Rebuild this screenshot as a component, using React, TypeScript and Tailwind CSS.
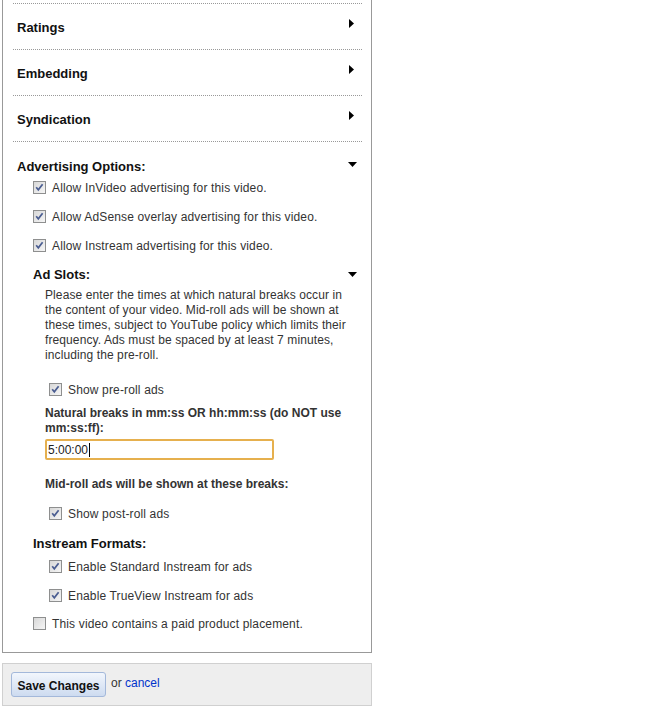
import React from 'react'

const font = "font-['Liberation_Sans',Arial,sans-serif]"

function Box({ checked }: { checked: boolean }) {
  return (
    <svg width="13" height="13" viewBox="0 0 13 13" className="shrink-0">
      <defs>
        <linearGradient id={checked ? 'cbOn' : 'cbOff'} x1="0" y1="0" x2="1" y2="1">
          <stop offset="0" stopColor="#d6d6d6" />
          <stop offset="1" stopColor="#f7f7f7" />
        </linearGradient>
      </defs>
      <rect x="0.5" y="0.5" width="12" height="12" fill={`url(#${checked ? 'cbOn' : 'cbOff'})`} stroke="#8e8f8f" />
      {checked && <path d="M3.2 6.2 L5.3 8.8 L9.6 3.2" stroke="#4a5d91" strokeWidth="1.7" fill="none" />}
    </svg>
  )
}

function CheckRow({ label, checked = true, className = '' }: { label: string; checked?: boolean; className?: string }) {
  return (
    <div className={`flex h-5 items-center gap-[6px] ${className}`}>
      <Box checked={checked} />
      <span className="pt-[2px] text-[12px] leading-[15px] tracking-[0.15px] text-[#333]">{label}</span>
    </div>
  )
}

function TriRight() {
  return (
    <svg width="5" height="9" viewBox="0 0 5 9" className="mb-[7px] mr-[8px] shrink-0">
      <polygon points="0,0 5,4.5 0,9" fill="#000" />
    </svg>
  )
}

function TriDown({ className = '' }: { className?: string }) {
  return (
    <svg width="9" height="5" viewBox="0 0 9 5" className={`mr-[5px] shrink-0 ${className}`}>
      <polygon points="0,0 9,0 4.5,5" fill="#000" />
    </svg>
  )
}

export default function App() {
  const closed = ['Ratings', 'Embedding', 'Syndication']

  return (
    <div className={`min-h-screen bg-white ${font}`}>
      <div className="ml-[2px] w-[370px] border-x border-b border-[#999] pt-[3px] pl-[10px] pr-[9px] pb-[19px]">
        {closed.map((title) => (
          <div key={title} className="flex h-[46px] items-center justify-between border-t border-dotted border-[#999] pl-[4px]">
            <span className="pt-[2px] text-[13px] font-bold leading-4 text-[#111]">{title}</span>
            <TriRight />
          </div>
        ))}

        <div className="border-t border-dotted border-[#999] pt-[15px]">
          <div className="flex items-center justify-between pl-[4px]">
            <span className="pt-[2px] text-[13px] font-bold leading-4 text-[#111]">Advertising Options:</span>
            <TriDown className="mb-[4px]" />
          </div>

          <div className="pl-[20px]">
            <div className="mt-[2px] flex flex-col gap-[9px]">
              <CheckRow label="Allow InVideo advertising for this video." />
              <CheckRow label="Allow AdSense overlay advertising for this video." />
              <CheckRow label="Allow Instream advertising for this video." />
            </div>

            <div className="mt-[10px] flex items-center justify-between">
              <span className="pt-[2px] text-[13px] font-bold leading-4 text-[#111]">Ad Slots:</span>
              <TriDown />
            </div>

            <p className="ml-[12px] mt-[5px] w-[306px] text-[12px] leading-[15px] tracking-[0.1px] text-[#333]">
              Please enter the times at which natural breaks occur in the content of your video. Mid-roll ads will be
              shown at these times, subject to YouTube policy which limits their frequency. Ads must be spaced by at
              least 7 minutes, including the pre-roll.
            </p>

            <CheckRow label="Show pre-roll ads" className="ml-[16px] mt-[16px]" />

            <div className="ml-[12px] mt-[7px] w-[306px] text-[12px] font-bold leading-[15px] text-[#333]">
              Natural breaks in mm:ss OR hh:mm:ss (do NOT use mm:ss:ff):
            </div>
            <div className="ml-[12px] mt-[3px] flex h-[21px] w-[229px] items-center rounded-[2px] border-2 border-[#e6b04e] bg-white pl-[1px]">
              <span className="pt-px text-[12px] leading-[15px] text-[#222]">5:00:00</span>
              <span className="ml-px h-[14px] w-px bg-black" />
            </div>

            <div className="ml-[12px] mt-[17px] text-[12px] font-bold leading-[15px] text-[#333]">
              Mid-roll ads will be shown at these breaks:
            </div>

            <CheckRow label="Show post-roll ads" className="ml-[16px] mt-[11px]" />

            <div className="mt-[12px] pt-px text-[13px] font-bold leading-4 text-[#111]">Instream Formats:</div>
            <div className="ml-[16px] mt-[4px] flex flex-col gap-[9px]">
              <CheckRow label="Enable Standard Instream for ads" />
              <CheckRow label="Enable TrueView Instream for ads" />
            </div>

            <CheckRow label="This video contains a paid product placement." checked={false} className="mt-[8px]" />
          </div>
        </div>
      </div>

      <div className="ml-[2px] mt-[10px] flex h-[43px] w-[370px] items-center border border-[#d0d0d0] bg-[#eee] pl-[8px]">
        <button className="h-[25px] w-[95px] rounded-[3px] border border-[#a3b8da] bg-linear-to-b from-[#f2f6fc] to-[#cddbf0] pt-[2px] text-[12px] font-bold text-[#111]">
          Save Changes
        </button>
        <span className="mb-[2px] ml-[5px] text-[12px] leading-[15px] text-[#333]">
          or <a href="#" className="text-[#03c]">cancel</a>
        </span>
      </div>
    </div>
  )
}
